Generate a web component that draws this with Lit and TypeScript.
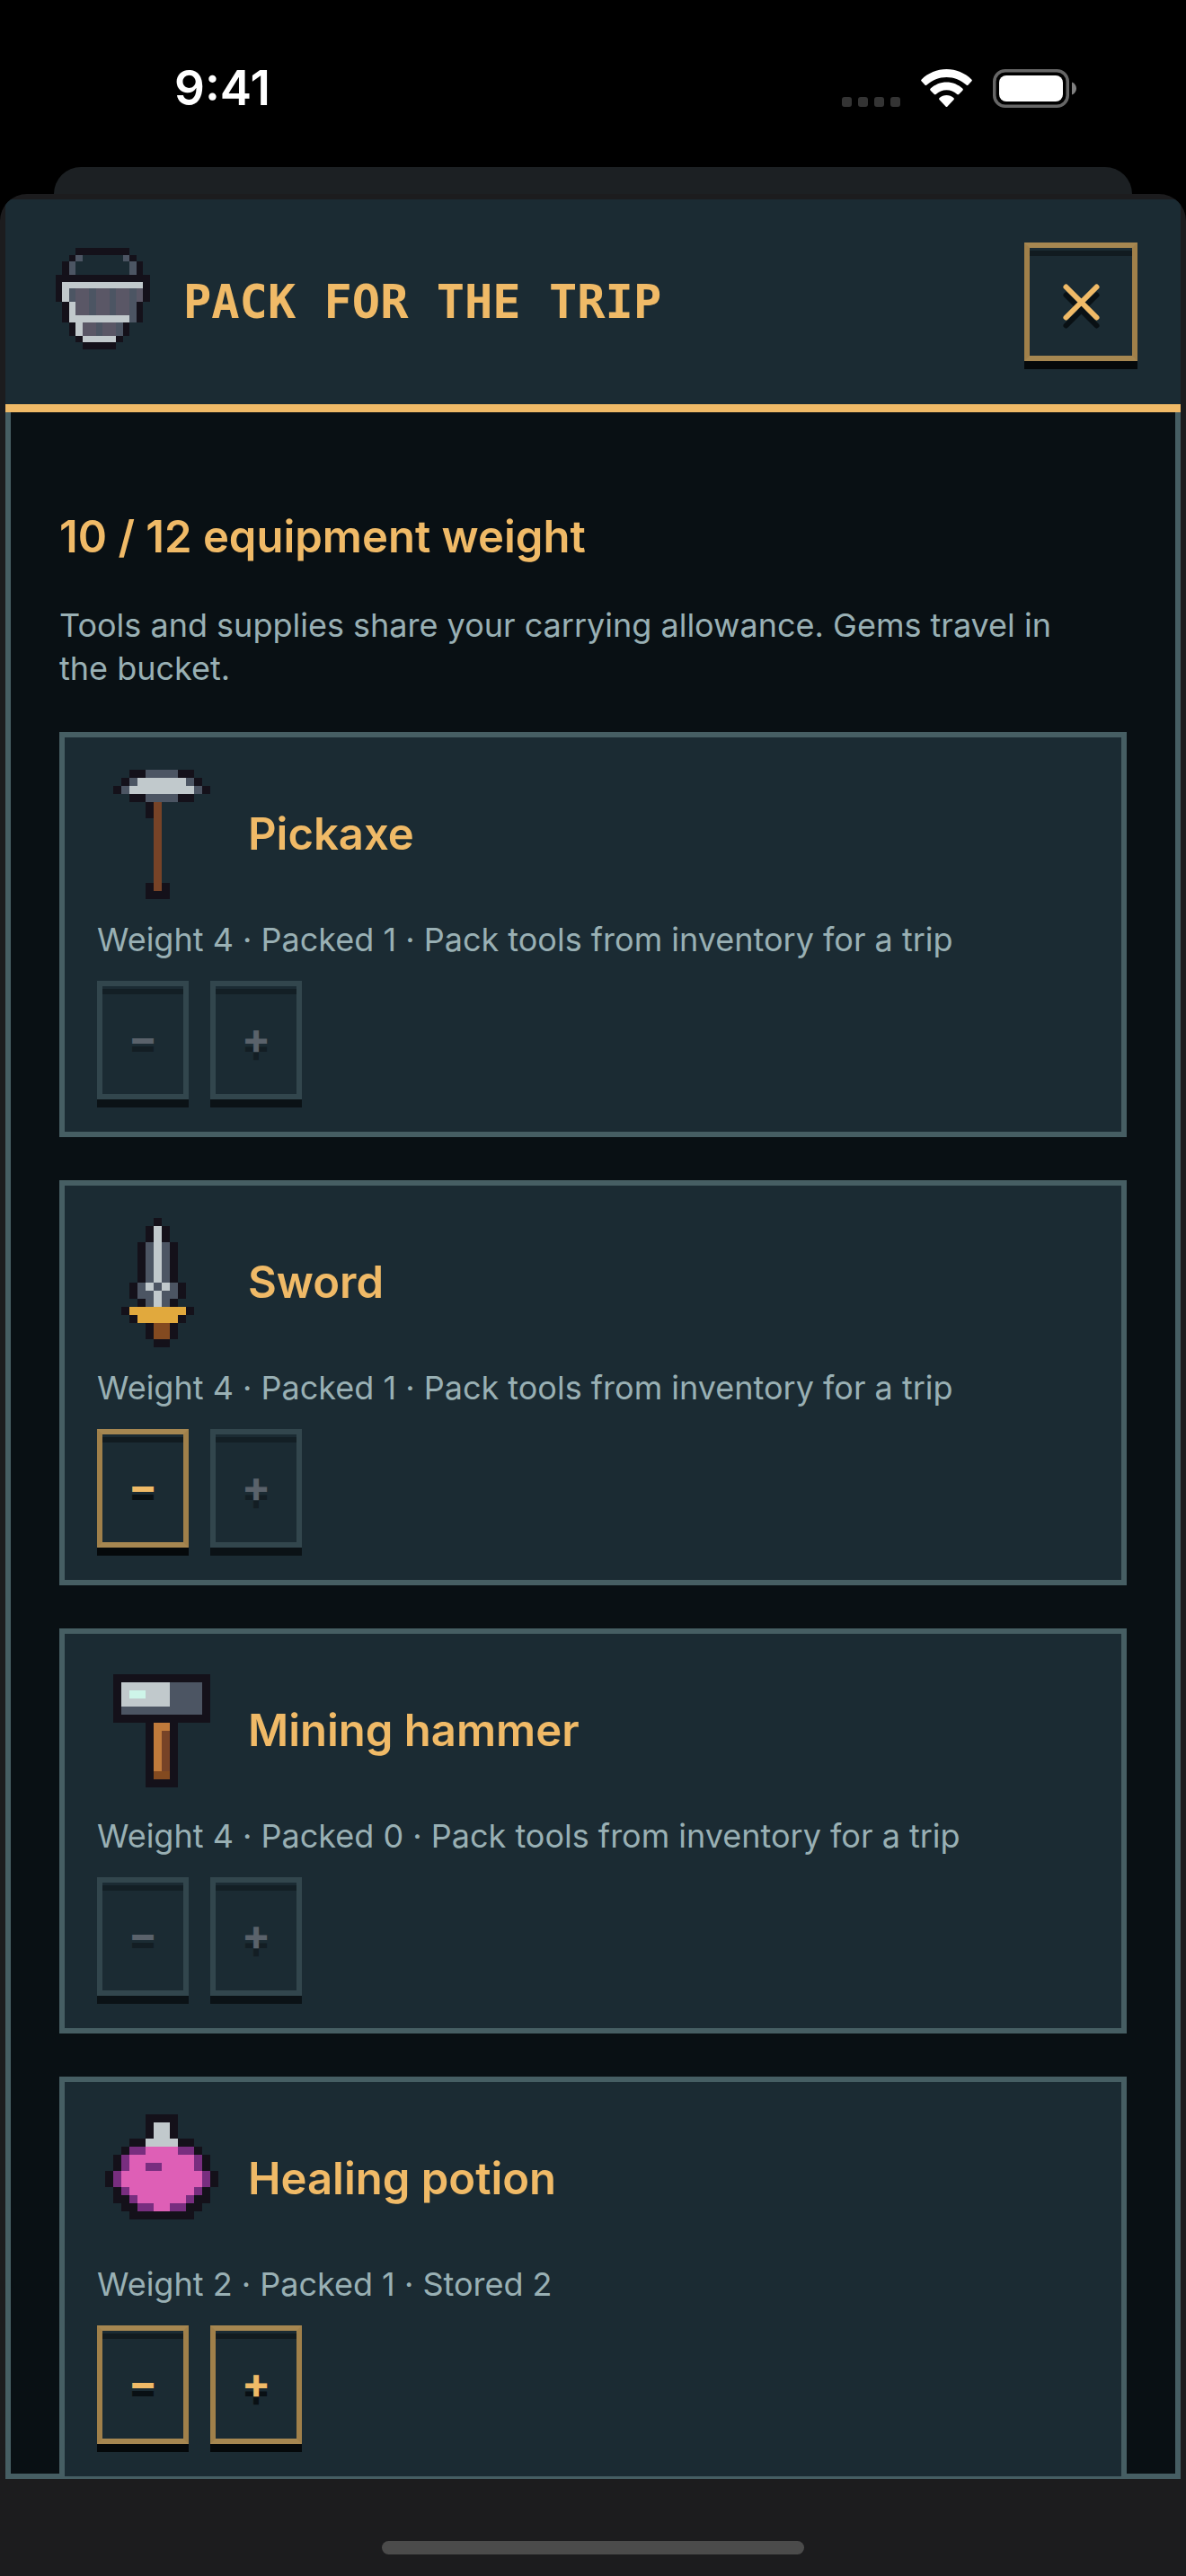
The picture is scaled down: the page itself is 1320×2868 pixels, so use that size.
import { LitElement, html, svg, css } from "lit";
import { customElement, property } from "lit/decorators.js";

const PALETTE: Record<string, string> = {
  k: "#14111a",
  s: "#4c5563",
  L: "#c1c9cc",
  g: "#5a5766",
  b: "#774327",
  y: "#e1a93d",
  o: "#834a20",
  O: "#c07a3b",
  M: "#cef5e9",
  v: "#782e7f",
  p: "#de5fb6",
};

// Each sprite is a 16x16 grid; a letter names a palette colour, a dot is empty.
const SPRITES: Record<string, string[]> = {
  bucket: [
    "....kkkkkkkk....",
    "...ks......sk...",
    "..ks........sk..",
    "..ks........sk..",
    ".kkkkkkkkkkkkkk.",
    ".kLLLLLLLLLLLLk.",
    ".kLsggsggsggsgk.",
    ".kLsggsggsggsgk.",
    "..kLggsggsggsk..",
    "..kLggsggsggsk..",
    "..kLLLLLLLLLsk..",
    "...kLggsggsk....",
    "...kLggsggsk....",
    "....kLLLLLk.....",
    ".....kkkkk......",
  ],
  pickaxe: [
    "....kksssskk....",
    "...ksLLLLLLsk...",
    "..ksLLLLLLLLsk..",
    "....kksssskk....",
    "......kb........",
    "......kb........",
    ".......b........",
    ".......b........",
    ".......b........",
    ".......b........",
    ".......b........",
    ".......b........",
    ".......b........",
    ".......b........",
    "......kbk.......",
    "......kkk.......",
  ],
  sword: [
    ".......k........",
    "......kLk.......",
    "......kLk.......",
    ".....ksLsk......",
    ".....ksLsk......",
    ".....ksLsk......",
    ".....ksLsk......",
    ".....ksLsk......",
    "....ksLsLsk.....",
    "....kssLssk.....",
    ".....ksLsk......",
    "...kyyyyyyyk....",
    "....kyyyyyk.....",
    "......kook......",
    "......kook......",
    ".......kk.......",
  ],
  hammer: [
    "................",
    "..kkkkkkkkkkkk..",
    "..kLLLLLLssssk..",
    "..kLMMLLLssssk..",
    "..kLLLLLLssssk..",
    "..kssssssssssk..",
    "..kkkkkkkkkkkk..",
    "......kOOk......",
    "......kObk......",
    "......kObk......",
    "......kObk......",
    "......kObk......",
    "......kObk......",
    "......kook......",
    "......kkkk......",
  ],
  potion: [
    "......kkkk......",
    "......kLLk......",
    "......kLLk......",
    "....kkLLLLkk....",
    "...kvvppppvvk...",
    "..kvppppppppvk..",
    "..kvppvvppppvk..",
    ".kvppppppppppvk.",
    ".kvppppppppppvk.",
    "..kvppppppppvk..",
    "..kkvppppppvkk..",
    "...kkvvppvvkk...",
    "....kkkkkkkk....",
  ],
};

interface Item {
  sprite: string;
  name: string;
  weight: number;
  packed: number;
  note: string;
  canRemove: boolean;
  canAdd: boolean;
}

const TOOL_NOTE = "Pack tools from inventory for a trip";

const ITEMS: Item[] = [
  { sprite: "pickaxe", name: "Pickaxe", weight: 4, packed: 1, note: TOOL_NOTE, canRemove: false, canAdd: false },
  { sprite: "sword", name: "Sword", weight: 4, packed: 1, note: TOOL_NOTE, canRemove: true, canAdd: false },
  { sprite: "hammer", name: "Mining hammer", weight: 4, packed: 0, note: TOOL_NOTE, canRemove: false, canAdd: false },
  { sprite: "potion", name: "Healing potion", weight: 2, packed: 1, note: "Stored 2", canRemove: true, canAdd: true },
];

@customElement("pixel-sprite")
export class PixelSprite extends LitElement {
  @property() name = "";

  static styles = css`
    :host { display: block; flex: none; }
    .sprite { display: block; width: 100%; height: 100%; }
  `;

  render() {
    const cells = (SPRITES[this.name] ?? []).flatMap((row, y) => {
      // Runs of one colour become a single rectangle.
      const runs = [...row.matchAll(/([a-zA-Z])\1*/g)];
      return runs.map(
        (r) => svg`<rect x=${r.index} y=${y} width=${r[0].length} height="1" fill=${PALETTE[r[1]]}></rect>`
      );
    });
    return html`<svg class="sprite" viewBox="0 0 16 16" shape-rendering="crispEdges" aria-hidden="true">${cells}</svg>`;
  }
}

const keyStyles = css`
  .key {
    box-sizing: border-box;
    display: flex;
    align-items: center;
    justify-content: center;
    height: 132px;
    margin: 0;
    padding: 0;
    border: 6px solid;
    border-color: #a68751 #a0804a;
    border-radius: 0;
    background: linear-gradient(#1b2b33 3px, #111b20 3px 9px, #1b2b33 9px) padding-box;
    box-shadow: 0 9px 0 #05090b;
    color: #f0ba67;
    font: 700 48px/60px Inter, "Liberation Sans", sans-serif;
    text-shadow: 0 9px 0 #091014;
  }
  .key:disabled {
    border-color: #32464d;
    background: linear-gradient(#1b2b33 3px, #131f25 3px 9px, #1b2b33 9px) padding-box;
    box-shadow: 0 9px 0 #0b1216;
    color: #5a626b;
    text-shadow: 0 9px 0 #131e24;
  }
`;

@customElement("item-card")
export class ItemCard extends LitElement {
  @property({ attribute: false }) item!: Item;

  static styles = [
    keyStyles,
    css`
      :host { display: block; flex: none; }
      .card {
        padding: 36px;
        border: 6px solid #465e63;
        background: #1b2b33;
      }
      .head { display: flex; align-items: center; gap: 24px; }
      .icon { width: 144px; height: 144px; }
      .name { margin: 0; color: #f0ba67; font-size: 49px; line-height: 60px; font-weight: 600; }
      .meta { margin: 24px 0; color: #99b0b4; font-size: 36px; line-height: 43px; }
      .keys { display: flex; gap: 24px; }
      .step { width: 102px; padding-bottom: 4px; }
    `,
  ];

  render() {
    const i = this.item;
    return html`
      <article class="card">
        <div class="head">
          <pixel-sprite class="icon" name=${i.sprite}></pixel-sprite>
          <h3 class="name">${i.name}</h3>
        </div>
        <p class="meta">Weight ${i.weight} · Packed ${i.packed} · ${i.note}</p>
        <div class="keys">
          <button class="key step" aria-label="Remove ${i.name}" ?disabled=${!i.canRemove}>−</button>
          <button class="key step" aria-label="Add ${i.name}" ?disabled=${!i.canAdd}>+</button>
        </div>
      </article>
    `;
  }
}

@customElement("status-bar")
export class StatusBar extends LitElement {
  static styles = css`
    :host { display: block; flex: none; }
    .bar {
      display: flex;
      align-items: center;
      justify-content: space-between;
      height: 186px;
      box-sizing: border-box;
      padding: 10px 122px 0 194px;
    }
    .time { color: #fff; font-size: 53px; line-height: 60px; font-weight: 600; }
    .signals { display: flex; align-items: flex-end; gap: 23px; }
    .glyph { display: block; }
  `;

  render() {
    return html`
      <div class="bar">
        <time class="time">9:41</time>
        <div class="signals">
          <svg class="glyph" width="65" height="12" viewBox="0 0 65 12" fill="#343434" aria-hidden="true">
            ${[0, 18, 36, 54].map((x) => svg`<rect x=${x} y="0" width="11" height="11" rx="3"></rect>`)}
          </svg>
          <svg class="glyph" width="57" height="43" viewBox="0 0 57 43" fill="#fff" aria-hidden="true">
            <path d="M28.500 0C39 0 49 4.300 56.300 11.400Q57.400 12.500 56.300 13.600L52.600 17.500Q51.600 18.500 50.500 17.500C44.500 12 36.800 8.900 28.500 8.900S12.500 12 6.500 17.500Q5.400 18.500 4.400 17.500L.7 13.600Q-.4 12.500 .7 11.400C8 4.300 18 0 28.500 0Z"/>
            <path d="M28.500 14.400C35.200 14.400 41.500 17 46.300 21.500Q47.500 22.600 46.400 23.700L42.400 27.800Q41.400 28.800 40.300 27.900C37 25 33 23.300 28.500 23.300S20 25 16.700 27.900Q15.600 28.800 14.600 27.800L10.600 23.700Q9.500 22.600 10.700 21.500C15.500 17 21.800 14.400 28.500 14.400Z"/>
            <path d="M28.500 28.900C31.500 28.900 34.200 30 36.400 31.900Q37.500 32.900 36.500 33.900L29.500 41.500Q28.500 42.500 27.500 41.500L20.500 33.900Q19.500 32.900 20.600 31.900C22.800 30 25.500 28.900 28.500 28.900Z"/>
          </svg>
          <svg class="glyph" width="93" height="43" viewBox="0 0 93 43" aria-hidden="true">
            <rect x="1.750" y="1.750" width="81.500" height="39.500" rx="12" fill="none" stroke="#666" stroke-width="3.500"/>
            <rect x="7" y="7" width="71" height="29" rx="8" fill="#fff"/>
            <path d="M88 14.500C91 15.500 93 18.300 93 21.500S91 27.500 88 28.500Z" fill="#808080"/>
          </svg>
        </div>
      </div>
    `;
  }
}

@customElement("app-root")
export class AppRoot extends LitElement {
  static styles = [
    keyStyles,
    css`
      :host {
        display: flex;
        flex-direction: column;
        height: 100vh;
        overflow: hidden;
        background: #000;
        font-family: Inter, "Liberation Sans", sans-serif;
      }
      .behind {
        flex: none;
        height: 30px;
        margin: 0 60px;
        border-radius: 30px 30px 0 0;
        background: #1c2023;
      }
      .sheet {
        flex: 1;
        min-height: 0;
        display: flex;
        flex-direction: column;
        box-sizing: border-box;
        padding: 6px 6px 0;
        border-radius: 30px 30px 0 0;
        overflow: hidden;
        background: #1c1c1e;
      }
      .header {
        flex: none;
        display: flex;
        align-items: center;
        gap: 30px;
        height: 228px;
        padding: 0 48px;
        border-bottom: 9px solid #f0ba67;
        background: #1b2b33;
      }
      .bucket { width: 120px; height: 120px; }
      .title {
        flex: 1;
        margin: 0;
        color: #f0ba67;
        font: 700 52px/60px "DejaVu Sans Mono", monospace;
        text-transform: uppercase;
      }
      .close { width: 126px; }
      .cross { display: block; overflow: visible; }
      .body {
        flex: 1;
        min-height: 0;
        overflow: hidden;
        padding: 108px 60px 0;
        background: #091014;
        box-shadow: inset 6px 0 #465e63, inset -6px -6px #465e63;
      }
      .load { margin: 0; color: #f0ba67; font-size: 49px; line-height: 61px; font-weight: 600; }
      .hint {
        margin: 44px 0 47px;
        padding-right: 48px;
        color: #99b0b4;
        font-size: 36px;
        line-height: 48px;
      }
      .list { display: flex; flex-direction: column; gap: 48px; }
      .footer {
        flex: none;
        display: flex;
        justify-content: center;
        align-items: flex-end;
        height: 108px;
        box-sizing: border-box;
        padding-bottom: 24px;
      }
      .home { width: 36%; height: 15px; border-radius: 8px; background: #4b4b4b; }
    `,
  ];

  render() {
    return html`
      <status-bar></status-bar>
      <div class="behind"></div>
      <section class="sheet">
        <header class="header">
          <pixel-sprite class="bucket" name="bucket"></pixel-sprite>
          <h1 class="title">Pack for the trip</h1>
          <button class="key close" aria-label="Close">
            <svg class="cross" width="41" height="41" viewBox="0 0 41 41" fill="none" stroke-width="6" stroke-linecap="round" aria-hidden="true">
              <path d="M3.500 12.500L37.500 46.500M37.500 12.500L3.500 46.500" stroke="#091014"/>
              <path d="M3.500 3.500L37.500 37.500M37.500 3.500L3.500 37.500" stroke="#f0ba67"/>
            </svg>
          </button>
        </header>
        <main class="body">
          <h2 class="load">10 / 12 equipment weight</h2>
          <p class="hint">Tools and supplies share your carrying allowance. Gems travel in the bucket.</p>
          <div class="list">
            ${ITEMS.map((item) => html`<item-card .item=${item}></item-card>`)}
          </div>
        </main>
        <footer class="footer"><div class="home"></div></footer>
      </section>
    `;
  }
}
